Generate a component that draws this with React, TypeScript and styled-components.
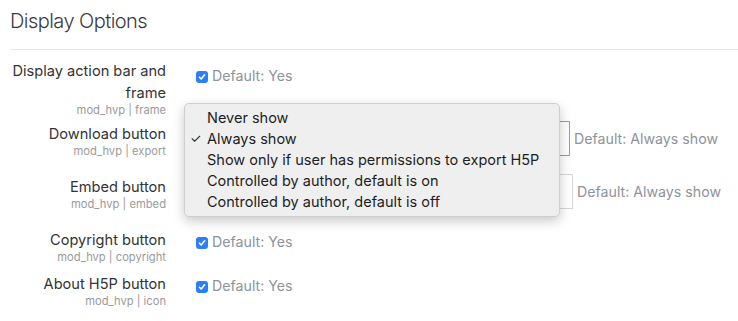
import React from "react";
import styled, { createGlobalStyle } from "styled-components";

const GlobalStyle = createGlobalStyle`
  html, body {
    margin: 0;
    padding: 0;
    background: #fff;
  }
  body {
    font-family: Inter, "Liberation Sans", sans-serif;
    color: #373a3c;
  }
`;

const Page = styled.div`
  width: 738px;
  height: 321px;
  overflow: hidden;
  padding-left: 10px;
  box-sizing: border-box;
`;

const Heading = styled.h3`
  margin: 0;
  padding-top: 8px;
  height: 41px;
  font-size: 20px;
  font-weight: 300;
  letter-spacing: -0.55px;
  line-height: 27px;
  color: #3a3a3a;
  border-bottom: 1px solid #e6e6e6;
`;

const Rows = styled.div`
  padding-top: 10px;
`;

const Row = styled.div<{ $gap: number }>`
  display: flex;
  align-items: flex-start;
  margin-bottom: ${(p) => p.$gap}px;
`;

const LabelCol = styled.div<{ $pad?: number }>`
  width: 156px;
  flex-shrink: 0;
  text-align: right;
  padding-top: ${(p) => p.$pad || 0}px;
`;

const Label = styled.div`
  font-size: 14.6px;
  line-height: 22px;
  color: #333;
`;

const Sub = styled.div`
  font-size: 11.2px;
  line-height: 13px;
  color: #9a9a9a;
`;

const Content = styled.div<{ $pad?: number }>`
  margin-left: 30px;
  padding-top: ${(p) => p.$pad || 0}px;
  display: flex;
  align-items: center;
`;

const Check = styled.span`
  width: 12px;
  height: 12px;
  margin: 1px 4px 0 0;
  border-radius: 3px;
  background: #2c7ef8;
  display: flex;
  align-items: center;
  justify-content: center;
`;

const Hint = styled.span`
  font-size: 14.2px;
  line-height: 22px;
  color: #8d939b;
`;

const SelectWrap = styled.div`
  position: relative;
  display: flex;
  align-items: center;
`;

const SelectBox = styled.div<{ $w: number; $focus?: boolean }>`
  width: ${(p) => p.$w}px;
  height: 35px;
  box-sizing: border-box;
  border: 1px solid ${(p) => (p.$focus ? "#6ea4e6" : "#d3d7db")};
  margin-right: 4px;
  padding: 0 10px;
  font-size: 15px;
  line-height: 33px;
  color: #495057;
`;

const Menu = styled.div`
  position: absolute;
  left: -12px;
  top: -18px;
  width: 376px;
  height: 114px;
  box-sizing: border-box;
  padding: 3px 0;
  background: #efefef;
  border: 1px solid #cfcfcf;
  border-radius: 5px;
  box-shadow: 0 4px 12px rgba(0, 0, 0, 0.22);
  z-index: 2;
`;

const MenuItem = styled.div`
  position: relative;
  padding-left: 22px;
  font-size: 14.5px;
  line-height: 21px;
  color: #1e1e1e;
  white-space: nowrap;
`;

const Tick = styled.span`
  position: absolute;
  left: 5px;
  top: 0;
  font-size: 13px;
`;

const CheckMark = () => (
  <svg width="8" height="8" viewBox="0 0 8 8">
    <path d="M1.4 4.2 L3.2 6 L6.6 1.8" fill="none" stroke="#fff" strokeWidth="1.6" strokeLinecap="round" strokeLinejoin="round" />
  </svg>
);

const options = [
  "Never show",
  "Always show",
  "Show only if user has permissions to export H5P",
  "Controlled by author, default is on",
  "Controlled by author, default is off",
];

const App: React.FC = () => {
  return (
    <Page>
      <GlobalStyle />
      <Heading>Display Options</Heading>
      <Rows>
        <Row $gap={4}>
          <LabelCol>
            <Label>Display action bar and frame</Label>
            <Sub>mod_hvp | frame</Sub>
          </LabelCol>
          <Content $pad={5}>
            <Check><CheckMark /></Check>
            <Hint>Default: Yes</Hint>
          </Content>
        </Row>

        <Row $gap={16}>
          <LabelCol $pad={2}>
            <Label>Download button</Label>
            <Sub>mod_hvp | export</Sub>
          </LabelCol>
          <Content>
            <SelectWrap>
              <SelectBox $w={374} $focus>Always show</SelectBox>
              <Hint>Default: Always show</Hint>
              <Menu>
                {options.map((o, i) => (
                  <MenuItem key={o}>
                    {i === 1 && <Tick>✓</Tick>}
                    {o}
                  </MenuItem>
                ))}
              </Menu>
            </SelectWrap>
          </Content>
        </Row>

        <Row $gap={18}>
          <LabelCol $pad={2}>
            <Label>Embed button</Label>
            <Sub>mod_hvp | embed</Sub>
          </LabelCol>
          <Content>
            <SelectWrap>
              <SelectBox $w={377}>Always show</SelectBox>
              <Hint>Default: Always show</Hint>
            </SelectWrap>
          </Content>
        </Row>

        <Row $gap={9}>
          <LabelCol>
            <Label>Copyright button</Label>
            <Sub>mod_hvp | copyright</Sub>
          </LabelCol>
          <Content $pad={2}>
            <Check><CheckMark /></Check>
            <Hint>Default: Yes</Hint>
          </Content>
        </Row>

        <Row $gap={0}>
          <LabelCol>
            <Label>About H5P button</Label>
            <Sub>mod_hvp | icon</Sub>
          </LabelCol>
          <Content $pad={2}>
            <Check><CheckMark /></Check>
            <Hint>Default: Yes</Hint>
          </Content>
        </Row>
      </Rows>
    </Page>
  );
};

export default App;
